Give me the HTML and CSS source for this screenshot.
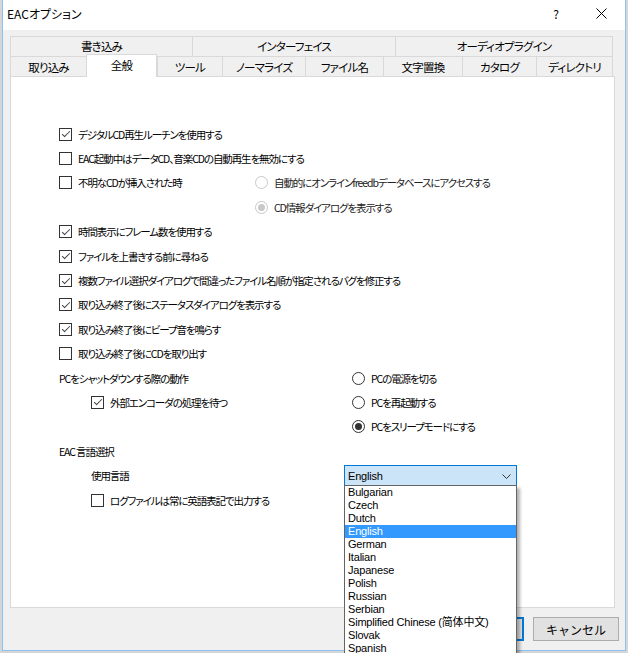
FILE: index.html
```html
<!DOCTYPE html>
<html lang="ja">
<head>
  <meta charset="UTF-8" />
  <title>EACオプション</title>
  <link rel="stylesheet" href="styles.css">
</head>
<body>

<div class="window">
  <div class="titlebar">
    <span class="title">EACオプション</span>
    <span class="help">?</span>
    <svg class="close" width="11" height="11" viewBox="0 0 11 11">
      <path d="M0.5 0.5 L10.5 10.5 M10.5 0.5 L0.5 10.5" stroke="#000" stroke-width="1" fill="none"/>
    </svg>
  </div>

  <!-- タブ -->
  <div class="tabs">
    <div class="tabrow row1">
      <div class="tab">書き込み</div>
      <div class="tab">インターフェイス</div>
      <div class="tab last">オーディオプラグイン</div>
    </div>
    <div class="tabrow row2">
      <div class="tab">取り込み</div>
      <div class="tab active">全般</div>
      <div class="tab">ツール</div>
      <div class="tab">ノーマライズ</div>
      <div class="tab">ファイル名</div>
      <div class="tab">文字置換</div>
      <div class="tab">カタログ</div>
      <div class="tab last">ディレクトリ</div>
    </div>
  </div>

  <!-- 全般 -->
  <div class="panel">
    <div class="row"><span class="cb on"></span>デジタルCD再生ルーチンを使用する</div>
    <div class="row"><span class="cb"></span>EAC起動中はデータCD、音楽CDの自動再生を無効にする</div>
    <div class="row">
      <div class="cell-a"><span class="cb"></span>不明なCDが挿入された時</div>
      <span class="rb dis"></span><span class="dim">自動的にオンラインfreedbデータベースにアクセスする</span>
    </div>
    <div class="row">
      <div class="cell-a"></div>
      <span class="rb dis on"></span><span class="dim">CD情報ダイアログを表示する</span>
    </div>
    <div class="row"><span class="cb on"></span>時間表示にフレーム数を使用する</div>
    <div class="row"><span class="cb on"></span>ファイルを上書きする前に尋ねる</div>
    <div class="row"><span class="cb on"></span>複数ファイル選択ダイアログで間違ったファイル名順が指定されるバグを修正する</div>
    <div class="row"><span class="cb on"></span>取り込み終了後にステータスダイアログを表示する</div>
    <div class="row"><span class="cb on"></span>取り込み終了後にビープ音を鳴らす</div>
    <div class="row"><span class="cb"></span>取り込み終了後にCDを取り出す</div>
    <div class="row">
      <div class="cell-b">PCをシャットダウンする際の動作</div>
      <span class="rb"></span>PCの電源を切る
    </div>
    <div class="row">
      <div class="cell-b indent"><span class="cb on"></span>外部エンコーダの処理を待つ</div>
      <span class="rb"></span>PCを再起動する
    </div>
    <div class="row">
      <div class="cell-b"></div>
      <span class="rb on"></span>PCをスリープモードにする
    </div>
    <div class="row">EAC 言語選択</div>
    <div class="row">
      <div class="cell-c indent">使用言語</div>
      <div class="combo">
        English
        <svg class="arrow" width="9" height="5" viewBox="0 0 9 5">
          <path d="M0.5 0.5 L4.5 4.5 L8.5 0.5" stroke="#333" stroke-width="1" fill="none"/>
        </svg>
        <ul class="droplist">
          <li>Bulgarian</li>
          <li>Czech</li>
          <li>Dutch</li>
          <li class="sel">English</li>
          <li>German</li>
          <li>Italian</li>
          <li>Japanese</li>
          <li>Polish</li>
          <li>Russian</li>
          <li>Serbian</li>
          <li>Simplified Chinese (简体中文)</li>
          <li>Slovak</li>
          <li>Spanish</li>
        </ul>
      </div>
    </div>
    <div class="row"><div class="indent"><span class="cb"></span>ログファイルは常に英語表記で出力する</div></div>
  </div>

  <div class="buttons">
    <button class="btn default">OK</button>
    <button class="btn">キャンセル</button>
  </div>
</div>

</body>
</html>
```

FILE: styles.css
```css
html, body {
  margin: 0;
  height: 100%;
  overflow: hidden;
}
body {
  background: #d6d6d6;
  font-family: "Noto Sans CJK JP", sans-serif;
  font-size: 11px;
  color: #000;
}
.window {
  margin-left: 2px;
  width: 622px;
  height: 650px;
  border: 1px solid #8cc2f2;
  border-top: none;
  background: #f0f0f0;
  display: flex;
  flex-direction: column;
}
.titlebar {
  height: 30px;
  background: #fff;
  display: flex;
  align-items: center;
  padding: 0 18px 4px 4px;
  box-sizing: border-box;
  font-size: 12px;
  font-feature-settings: "palt";
}
.title {
  flex: 1;
}
.help {
  margin-right: 37px;
  font-size: 12px;
}

/* tabs */
.tabs {
  margin: 6px 0 0 7px;
  width: 603px;
}
.tabrow {
  display: grid;
  height: 20px;
}
.row1 {
  grid-template-columns: 182px 203px 218px;
}
.row2 {
  grid-template-columns: 76px 71px 65px 83px 78px 79px 74px 77px;
}
.tab {
  box-sizing: border-box;
  border-top: 1px solid #d9d9d9;
  border-left: 1px solid #d9d9d9;
  display: flex;
  align-items: center;
  justify-content: center;
  font-size: 11.5px;
  font-feature-settings: "palt";
  letter-spacing: -0.8px;
  padding-bottom: 1px;
}
.tab.last {
  border-right: 1px solid #d9d9d9;
}
.tab.active {
  background: #fff;
  margin-top: -2px;
  height: 23px;
  border-right: 1px solid #d9d9d9;
  position: relative;
  z-index: 1;
  padding-bottom: 3px;
}

/* panel */
.panel {
  margin-left: 7px;
  width: 555px;
  height: 485px;
  border: 1px solid #d9d9d9;
  background: #fff;
  padding: 45px 0 0 48px;
  font-size: 10.5px;
  font-feature-settings: "palt";
  letter-spacing: -1.1px;
}
.row {
  display: flex;
  align-items: center;
  height: 24.4px;
  white-space: nowrap;
}
.row > div {
  display: flex;
  align-items: center;
}
.cell-a {
  width: 196px;
}
.cell-b {
  width: 293px;
}
.cell-c {
  width: 285px;
}
.indent {
  padding-left: 32px;
  box-sizing: border-box;
}
.cb {
  flex: none;
  width: 13px;
  height: 13px;
  box-sizing: border-box;
  border: 1px solid #333;
  margin-right: 6px;
  position: relative;
}
.cb.on::after {
  content: "";
  position: absolute;
  left: 3.5px;
  top: 0.5px;
  width: 3px;
  height: 7px;
  border: solid #444;
  border-width: 0 1.4px 1.4px 0;
  transform: rotate(45deg);
}
.rb {
  flex: none;
  width: 13px;
  height: 13px;
  box-sizing: border-box;
  border: 1px solid #333;
  border-radius: 50%;
  margin-right: 6px;
  display: flex;
  align-items: center;
  justify-content: center;
}
.rb.on::after {
  content: "";
  width: 7px;
  height: 7px;
  border-radius: 50%;
  background: #333;
}
.rb.dis {
  border-color: #c8c8c8;
}
.rb.dis.on::after {
  background: #c8c8c8;
}
.dim {
  color: #222;
}

/* combo box */
.combo {
  position: relative;
  width: 173px;
  height: 21px;
  box-sizing: border-box;
  border: 1px solid #0078d7;
  background: #cce4f7;
  padding-left: 3px;
  display: flex;
  align-items: center;
  font-family: "Liberation Sans", "Noto Sans CJK SC", sans-serif;
  font-size: 11px;
  letter-spacing: -0.2px;
}
.arrow {
  position: absolute;
  right: 5px;
  top: 8px;
}
.droplist {
  position: absolute;
  left: -1px;
  top: 19px;
  width: 173px;
  margin: 0;
  padding: 0;
  list-style: none;
  box-sizing: border-box;
  border: 1px solid #646464;
  background: #fff;
  box-shadow: 3px 3px 3px rgba(0, 0, 0, 0.3);
  z-index: 5;
}
.droplist li {
  height: 13px;
  line-height: 13px;
  padding-left: 3px;
}
.droplist li.sel {
  background: #3399ff;
  color: #fff;
}

/* buttons */
.buttons {
  display: flex;
  justify-content: flex-end;
  gap: 9px;
  margin-top: 9px;
  padding-right: 6px;
}
.btn {
  width: 86px;
  height: 24px;
  box-sizing: border-box;
  border: 1px solid #adadad;
  background: #e1e1e1;
  font-family: "Noto Sans CJK JP", sans-serif;
  font-size: 12px;
  padding: 0;
  color: #000;
}
.btn.default {
  border: 2px solid #0078d7;
}
```
